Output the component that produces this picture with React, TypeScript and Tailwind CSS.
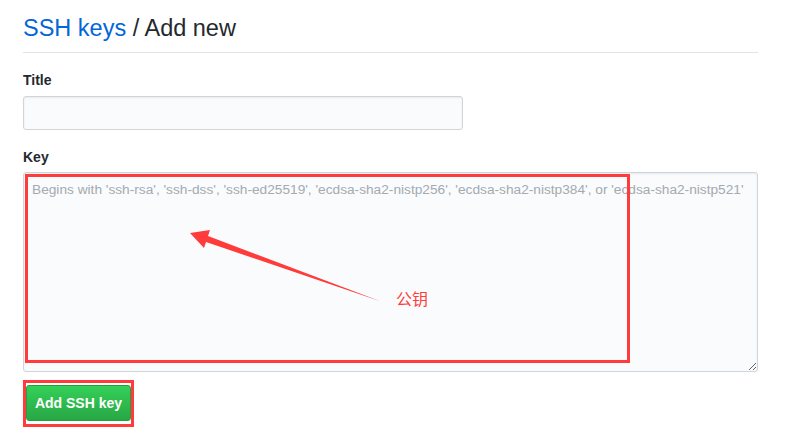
import React from 'react';

const placeholder =
  "Begins with 'ssh-rsa', 'ssh-dss', 'ssh-ed25519', 'ecdsa-sha2-nistp256', 'ecdsa-sha2-nistp384', or 'ecdsa-sha2-nistp521'";

export default function App() {
  return (
    <div className="min-h-screen bg-white px-[23px] pt-[10px] font-['Liberation_Sans',Arial,sans-serif] text-[#24292e]">
      <h2 className="w-[735px] border-b border-[#e1e4e8] pb-[6px] text-[23.5px] leading-[36px] font-normal">
        <a className="text-[#0366d6]">SSH keys</a> / Add new
      </h2>

      <form className="mt-[17px]" onSubmit={(e) => e.preventDefault()}>
        <label className="block text-[14px] leading-[20px] font-bold">Title</label>
        <input
          className="mt-[6px] block h-[34px] w-[440px] rounded-[3px] border border-[#d1d5da] bg-[#fafbfc] px-2 text-[14px] shadow-[inset_0_1px_2px_rgba(27,31,35,0.075)] outline-none"
          type="text"
        />

        <label className="mt-[17px] block text-[14px] leading-[20px] font-bold">Key</label>
        <div className="relative mt-[5px] w-[735px]">
          <textarea
            className="block h-[200px] w-[735px] resize-y rounded-[3px] border border-[#d1d5da] bg-[#fafbfc] pl-[8px] pr-[2px] pt-[7px] pb-[6px] text-[13.7px] leading-[20px] shadow-[inset_0_1px_2px_rgba(27,31,35,0.075)] outline-none placeholder:text-[#a3aab1]"
            placeholder={placeholder}
          />
          {/* annotation */}
          <div className="pointer-events-none absolute left-[2px] top-[2px] h-[189px] w-[605px] border-[3px] border-[#ff3b3b]" />
          <svg className="pointer-events-none absolute left-0 top-0" width="735" height="200">
            <polygon
              points="167,61 187,58 185,64 358,129.5 183,70 181,76"
              fill="#ff3b3b"
            />
          </svg>
          <span className="pointer-events-none absolute left-[373px] top-[115px] font-['Noto_Sans_CJK_SC',sans-serif] text-[16px] leading-[22px] text-[#ff3b3b]">
            公钥
          </span>
        </div>

        <div className="mt-[8px] inline-block border-[3px] border-[#ff3b3b] pt-[2px] pb-[3px]">
          <button
            type="submit"
            className="block h-[36px] w-[105px] rounded-[3px] border border-[#22a043] bg-gradient-to-b from-[#34d058] to-[#28a745] text-[14px] font-bold text-white"
          >
            Add SSH key
          </button>
        </div>
      </form>
    </div>
  );
}
